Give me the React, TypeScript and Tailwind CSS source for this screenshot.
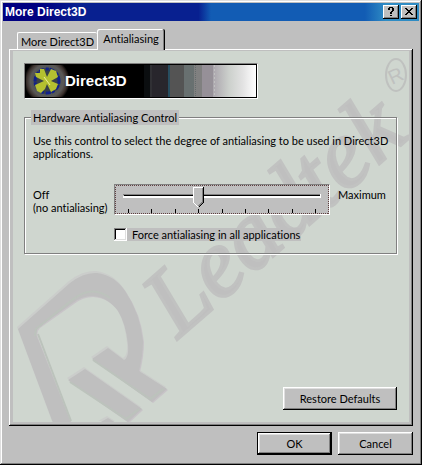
import { useState } from "react";
import type { ReactNode } from "react";

const STEPS = [14, 37, 61, 84, 108, 131, 154, 178, 201];

type ButtonProps = {
  children: ReactNode;
  className: string;
  isDefault?: boolean;
};

function Button(props: ButtonProps) {
  return (
    <button
      type="button"
      className={`h-[23px] pb-px text-center bg-[#bfbfbf] ${
        props.isDefault
          ? "shadow-[inset_0_0_0_1px_#000,inset_-2px_-2px_0_#000,inset_2px_2px_0_#fff,inset_-3px_-3px_0_#808080,inset_3px_3px_0_#dfdfdf]"
          : "shadow-[inset_-1px_-1px_0_#000,inset_1px_1px_0_#fff,inset_-2px_-2px_0_#808080,inset_2px_2px_0_#dfdfdf]"
      } ${props.className}`}
    >
      {props.children}
    </button>
  );
}

function TitleButton(props: { label: string; children: ReactNode }) {
  return (
    <button
      type="button"
      aria-label={props.label}
      className="w-4 h-[14px] bg-[#bfbfbf] shadow-[inset_-1px_-1px_0_#000,inset_1px_1px_0_#fff,inset_-2px_-2px_0_#808080]"
    >
      <svg width="16" height="14" shapeRendering="crispEdges" aria-hidden="true">
        {props.children}
      </svg>
    </button>
  );
}

function TitleBar() {
  return (
    <header className="flex items-center h-[18px] pl-[2px] pr-[2px] bg-[linear-gradient(90deg,#000080_0,#000080_9%,#082090_18%,#082090_47%,#125cb4_50%,#125cb4_87%,#2f8cc4_92%)]">
      <h1 className="flex-1 text-xs font-bold text-white font-['Liberation_Sans',Arial,sans-serif]">
        More Direct3D
      </h1>
      <div className="flex gap-[2px]">
        <TitleButton label="Help">
          <path d="M5 3h2v2H5zM6 2h4v1H6zM9 3h2v3H9zM8 6h2v1H8zM7 7h2v2H7zM7 10h2v1H7z" />
        </TitleButton>
        <TitleButton label="Close">
          <path d="M4 3h2v1h1v1h2V4h1V3h2v1h-1v1h-1v1H9v1h1v1h1v1h1v1h-2V9H9V8H7v1H6v1H4V9h1V8h1V7h1V6H6V5H5V4H4z" />
        </TitleButton>
      </div>
    </header>
  );
}

function Tabs() {
  return (
    <div role="tablist" className="flex items-end px-2 relative z-10 -mb-px">
      <button
        type="button"
        role="tab"
        aria-selected="false"
        className="h-[17px] mb-px w-20 rounded-t-[2px] border-t border-l border-white bg-[#bfbfbf]"
      >
        More Direct3D
      </button>
      <button
        type="button"
        role="tab"
        aria-selected="true"
        className="h-[21px] pb-[2px] w-[68px] rounded-t-[2px] bg-[#bfbfbf] shadow-[inset_-1px_0_0_#000,inset_1px_1px_0_#fff,inset_-2px_0_0_#808080]"
      >
        Antialiasing
      </button>
    </div>
  );
}

function MarkShape() {
  return (
    <>
      <path d="M18 329 L70 283 Q84 272 97 273 Q114 275 125 291 Q140 313 143 341 Q143 355 139 371 L167 389 L152 402 L92 359 L108 348 L124 360 Q129 358 128 345 Q126 324 118 311 Q108 297 92 296 Q82 296 73 303 L39 327 Q35 331 37 337 L71 423 L53 423 Z" />
      <path d="M68 380 L85 369 L142 409 L128 422 Z" />
      <path d="M99 423 L108 418 L116 423 Z" />
    </>
  );
}

function Watermark() {
  return (
    <svg
      aria-hidden="true"
      viewBox="13 51 396 371"
      className="absolute left-0 top-0 w-[396px] h-[371px] overflow-visible pointer-events-none"
    >
      <defs>
        <g id="mark">
          <MarkShape />
        </g>
        <clipPath id="panel">
          <rect x="13" y="51" width="396" height="371" />
        </clipPath>
      </defs>
      <g clipPath="url(#panel)">
        <use href="#mark" x="-1" y="-2" fill="#cbcdcb" />
        <use href="#mark" x="1" y="1" fill="#c8c4c8" />
        <use href="#mark" fill="#bfbfbf" />
        <path
          d="M35 336 L36 329 L72 300 Q92 284 110 298 M38 334 L71 421 M93 360 L150 399 L163 389 M70 382 L126 419 L139 409"
          fill="none"
          stroke="#bcc3bc"
          strokeWidth="2"
        />
      </g>
      <text
        transform="translate(178 339) rotate(-41)"
        fontFamily="'Liberation Serif', serif"
        fontStyle="italic"
        fontSize="97"
        fill="#bfbfbf"
        stroke="#c1c2c1"
        strokeWidth="3"
      >
        Leadtek
      </text>
      <ellipse cx="396" cy="75" rx="10" ry="16" fill="none" stroke="#bfc1bf" strokeWidth="2" />
      <text
        transform="translate(392 85) rotate(-25)"
        fontFamily="'Liberation Sans', sans-serif"
        fontSize="20"
        fill="#bfc1bf"
      >
        R
      </text>
    </svg>
  );
}

function Banner() {
  return (
    <div className="w-[234px] p-px border border-t-[#808080] border-l-[#808080] border-white bg-black">
      <svg viewBox="0 0 230 32" className="block w-full" role="img" aria-label="Direct3D">
        <defs>
          <radialGradient id="halo">
            <stop offset="0.5" stopColor="#4c5458" />
            <stop offset="0.72" stopColor="#5a5856" />
            <stop offset="0.88" stopColor="#3a302c" />
            <stop offset="1" stopColor="#000" />
          </radialGradient>
          <linearGradient id="fade">
            <stop offset="0" stopColor="#969098" />
            <stop offset="0.25" stopColor="#b0acb2" />
            <stop offset="0.5" stopColor="#ccd0cc" />
            <stop offset="0.75" stopColor="#e2e2e2" />
            <stop offset="1" stopColor="#fff" />
          </linearGradient>
        </defs>
        <rect width="230" height="32" fill="#000" />
        <circle cx="21" cy="16" r="23" fill="url(#halo)" />
        <circle cx="21" cy="16" r="13" fill="#384048" />
        <circle cx="21" cy="16" r="12" fill="none" stroke="#10208c" strokeWidth="3" strokeDasharray="3 1 5 2" />
        <path
          d="M21 12 L18 4 L14 4 L14 8 L9 8 L10 12 L18 16 L9 20 L11 26 L15 28 L19 24 L21 19 L25 27 L30 24 L32 19 L25 16 L32 12 L30 6 L25 4 Z"
          fill="#b4c030"
        />
        <path d="M18 12 L24 20" stroke="#eef09c" strokeWidth="1" />
        <g shapeRendering="crispEdges">
          <rect x="118" width="6" height="32" fill="#0b0e10" />
          <rect x="124" width="2" height="32" fill="#303034" />
          <rect x="126" width="16" height="32" fill="#28262c" />
          <rect x="142" width="2" height="32" fill="#284e60" />
          <rect x="144" width="14" height="32" fill="#545454" />
          <rect x="158" width="10" height="32" fill="#687070" />
          <rect x="168" width="8" height="32" fill="#808080" />
          <path d="M169 0v32" stroke="#646c6c" strokeDasharray="1 1" />
          <rect x="176" width="54" height="32" fill="url(#fade)" />
          <rect x="176" width="11" height="32" fill="#969098" />
          <path d="M188 0v32" stroke="#c0c0c0" strokeDasharray="2 2" />
        </g>
        <text
          x="39"
          y="21"
          fill="#fff"
          fontFamily="'Liberation Sans', sans-serif"
          fontWeight="bold"
          fontSize="15"
        >
          Direct3D
        </text>
      </svg>
    </div>
  );
}

function AntialiasSlider() {
  const [level, setLevel] = useState(3);
  const x = STEPS[level];

  return (
    <div className="relative w-[216px] h-[31px] bg-[#bfbfbf] border border-t-[#808080] border-l-[#808080] border-white">
      <svg
        width="216"
        height="31"
        shapeRendering="crispEdges"
        aria-hidden="true"
        className="absolute -left-px -top-px"
      >
        <rect x="1.5" y="1.5" width="213" height="28" fill="none" stroke="#604040" strokeDasharray="1 1" />
        <path d="M9 10.5h198" stroke="#808080" />
        <path d="M10 11.5h196" stroke="#000" />
        <path d="M9 12.5h197M9 13.5h198M206.5 10v4" stroke="#fff" />
        {STEPS.map((step) => (
          <path key={step} d={`M${step + 0.5} 25v4`} stroke="#000" />
        ))}
        <g transform={`translate(${x - 5} 3)`}>
          <path d="M0 0h11v16l-5 5h-1l-5-5z" fill="#bfbfbf" />
          <path d="M.5 16V.5H10M.5 15.5l5 5" fill="none" stroke="#fff" />
          <path d="M9.5 1v14l-4 4" fill="none" stroke="#808080" />
          <path d="M10.5 0v15.5l-5 5" fill="none" stroke="#000" />
        </g>
      </svg>
      <input
        type="range"
        min="0"
        max="8"
        value={level}
        onChange={(e) => setLevel(Number(e.target.value))}
        aria-label="Antialiasing level"
        className="absolute inset-0 w-full h-full opacity-0"
      />
    </div>
  );
}

function ControlGroup() {
  return (
    <fieldset className="h-[144px] mt-[11px] pl-2 border border-[#808080] shadow-[1px_1px_0_#fff,inset_1px_1px_0_#fff]">
      <legend className="-ml-[2px] px-[2px] h-[15px] leading-[15px] bg-[#bfbfbf]">
        Hardware Antialiasing Control
      </legend>
      <p className="mt-[9px]">
        Use this control to select the degree of antialiasing to be used in Direct3D applications.
      </p>
      <div className="flex mt-6">
        <p className="w-[81px] pt-1 whitespace-nowrap">
          Off
          <br />
          (no antialiasing)
        </p>
        <AntialiasSlider />
        <p className="pl-2 pt-1">Maximum</p>
      </div>
      <label className="flex w-fit mt-[13px] ml-[81px] bg-[#bfbfbf] pr-px">
        <input
          type="checkbox"
          className="appearance-none w-[13px] h-[13px] bg-white checked:bg-[#404040] shadow-[inset_-1px_-1px_0_#fff,inset_1px_1px_0_#808080,inset_-2px_-2px_0_#dfdfdf,inset_2px_2px_0_#000]"
        />
        <span className="pl-[5px]">Force antialiasing in all applications</span>
      </label>
    </fieldset>
  );
}

export default function App() {
  return (
    <div className="min-h-screen flex flex-col p-[3px] bg-[#bfbfbf] text-black text-[11px] leading-[13px] font-[Lato,sans-serif] [font-variant-ligatures:none] shadow-[inset_-1px_-1px_0_#000,inset_1px_1px_0_#dfdfdf,inset_-2px_-2px_0_#808080,inset_2px_2px_0_#fff]">
      <TitleBar />
      <main className="flex-1 flex flex-col px-[6px] pt-2 pb-[7px]">
        <Tabs />
        <section className="flex-1 flex flex-col pt-[2px] px-1 pb-1 shadow-[inset_-1px_-1px_0_#000,inset_1px_1px_0_#fff,inset_-2px_-2px_0_#808080]">
          <div className="relative flex-1 flex flex-col bg-[#cfd6cf]">
            <Watermark />
            <div className="relative flex-1 flex flex-col pt-3 pl-[11px] pr-3 pb-3">
              <Banner />
              <ControlGroup />
              <Button className="mt-auto self-end w-[114px]">Restore Defaults</Button>
            </div>
          </div>
        </section>
        <div className="flex justify-end gap-[6px] mt-[6px]">
          <Button className="w-[75px]" isDefault>
            OK
          </Button>
          <Button className="w-[75px]">Cancel</Button>
        </div>
      </main>
    </div>
  );
}
